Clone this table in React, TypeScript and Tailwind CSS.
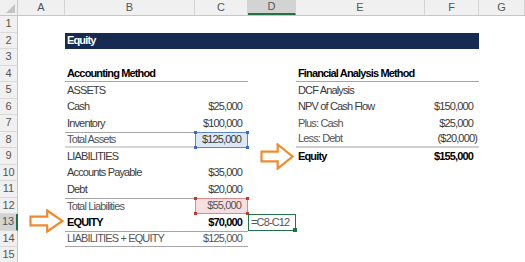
import React from "react";

const COLS = "grid grid-cols-[18px_47px_130px_53px_48px_129px_54px_1fr]";

function RowHdr({ n, active }: { n: number; active?: boolean }) {
  return (
    <div
      className={
        "flex items-center justify-center border-b border-[#d9d9d9] text-[11px] tracking-normal text-[#555] " +
        (active ? "bg-[#d3d3d3] border-r-2 border-r-[#217346]" : "bg-[#f0f0f0] border-r border-r-[#c8c8c8]")
      }
    >
      {n}
    </div>
  );
}

function C({ children, className = "" }: { children?: React.ReactNode; className?: string }) {
  return <div className={"relative flex items-center whitespace-nowrap overflow-visible " + className}>{children}</div>;
}

function Handles({ color }: { color: string }) {
  const s = "absolute w-[3px] h-[3px] " + color;
  return (
    <>
      <span className={s + " -left-[2px] -top-[2px]"} />
      <span className={s + " -right-[2px] -top-[2px]"} />
      <span className={s + " -left-[2px] -bottom-[2px]"} />
      <span className={s + " -right-[2px] -bottom-[2px]"} />
    </>
  );
}

function Arrow({ w, h }: { w: number; h: number }) {
  const sh = h * 0.36;
  const mid = h / 2;
  const hx = w * 0.52;
  return (
    <svg width={w} height={h} viewBox={`0 0 ${w} ${h}`}>
      <polygon
        points={`1.5,${mid - sh / 2} ${hx},${mid - sh / 2} ${hx},1.5 ${w - 1.5},${mid} ${hx},${h - 1.5} ${hx},${mid + sh / 2} 1.5,${mid + sh / 2}`}
        fill="white"
        stroke="#f08a2c"
        strokeWidth="2.2"
        strokeLinejoin="miter"
      />
    </svg>
  );
}

export default function App() {
  const row = COLS + " h-[16.5px]";
  const txt = "pl-[2px] text-[#3a3a3a]";
  const num = "justify-end pr-[6px] text-[#3a3a3a]";
  const line = "border-[#a6a6a6]";
  return (
    <div
      className="relative w-[525px] h-[262px] overflow-hidden bg-white text-[11px] tracking-[-0.85px] leading-none"
      style={{ fontFamily: '"Liberation Sans", Arial, sans-serif' }}
    >
      {/* column headers */}
      <div className={COLS + " h-[16px] bg-[#f0f0f0] border-b border-[#c6c6c6] text-[#555] tracking-normal"}>
        <div className="relative border-r border-[#c8c8c8]">
          <svg className="absolute right-[2px] bottom-[2px]" width="9" height="9" viewBox="0 0 9 9">
            <polygon points="9,0 9,9 0,9" fill="#c4c4c4" />
          </svg>
        </div>
        {["A", "B", "C", "D", "E", "F", "G"].map((l) => (
          <div
            key={l}
            className={
              "flex items-center justify-center border-r border-[#d4d4d4] " +
              (l === "D" ? "bg-[#d3d3d3] border-b-2 border-b-[#217346]" : "")
            }
          >
            {l}
          </div>
        ))}
      </div>

      {/* 1 */}
      <div className={row}><RowHdr n={1} /></div>
      {/* 2 */}
      <div className={row}>
        <RowHdr n={2} />
        <C />
        <C className="col-span-5 bg-[#152b52] pl-[2px] font-bold text-white">Equity</C>
      </div>
      {/* 3 */}
      <div className={row}><RowHdr n={3} /></div>
      {/* 4 */}
      <div className={row}>
        <RowHdr n={4} />
        <C />
        <C className={"pl-[2px] font-bold text-black border-b " + line}>Accounting Method</C>
        <C className={"border-b " + line} />
        <C />
        <C className={"pl-[2px] font-bold text-black border-b " + line}>Financial Analysis Method</C>
        <C className={"border-b " + line} />
      </div>
      {/* 5 */}
      <div className={row}>
        <RowHdr n={5} />
        <C />
        <C className={txt}>ASSETS</C>
        <C />
        <C />
        <C className={txt}>DCF Analysis</C>
      </div>
      {/* 6 */}
      <div className={row}>
        <RowHdr n={6} />
        <C />
        <C className={txt}>Cash</C>
        <C className={num}>$25,000</C>
        <C />
        <C className={txt}>NPV of Cash Flow</C>
        <C className={num}>$150,000</C>
      </div>
      {/* 7 */}
      <div className={row}>
        <RowHdr n={7} />
        <C />
        <C className={txt}>Inventory</C>
        <C className={num}>$100,000</C>
        <C />
        <C className={txt + " text-[#555]"}>Plus: Cash</C>
        <C className={num}>$25,000</C>
      </div>
      {/* 8 */}
      <div className={row}>
        <RowHdr n={8} />
        <C />
        <C className={"pl-[2px] text-[#555] border-t border-b-2 border-t-[#a6a6a6] border-b-[#d6d6d6]"}>Total Assets</C>
        <C className={num + " bg-[#dde8f6] border border-[#5b86c8]"}>
          $125,000
          <Handles color="bg-[#3b6cc0]" />
        </C>
        <C />
        <C className={txt + " text-[#555] border-b-2 border-[#cfcfcf]"}>Less: Debt</C>
        <C className="justify-end pr-[2px] text-[#3a3a3a] border-b-2 border-[#cfcfcf]">($20,000)</C>
      </div>
      {/* 9 */}
      <div className={row}>
        <RowHdr n={9} />
        <C />
        <C className={txt}>LIABILITIES</C>
        <C />
        <C />
        <C className="pl-[2px] font-bold text-black">Equity</C>
        <C className="justify-end pr-[6px] font-bold text-black">$155,000</C>
      </div>
      {/* 10 */}
      <div className={row}>
        <RowHdr n={10} />
        <C />
        <C className={txt}>Accounts Payable</C>
        <C className={num}>$35,000</C>
      </div>
      {/* 11 */}
      <div className={row}>
        <RowHdr n={11} />
        <C />
        <C className={txt}>Debt</C>
        <C className={num}>$20,000</C>
      </div>
      {/* 12 */}
      <div className={row}>
        <RowHdr n={12} />
        <C />
        <C className={"pl-[2px] text-[#555] border-t " + line}>Total Liabilities</C>
        <C className="justify-end pr-[6px] text-[#555] bg-[#f7dfdf] border border-[#d98a8a]">
          $55,000
          <Handles color="bg-[#c0392b]" />
        </C>
      </div>
      {/* 13 */}
      <div className={row}>
        <RowHdr n={13} active />
        <C />
        <C className="pl-[2px] font-bold text-black">EQUITY</C>
        <C className="justify-end pr-[6px] font-bold text-black">$70,000</C>
        <C className="pl-[2px] text-[#555] border border-[#217346]">
          =C8-C12
          <span className="absolute -right-[2px] -bottom-[2px] w-[4px] h-[4px] bg-[#217346]" />
        </C>
      </div>
      {/* 14 */}
      <div className={row}>
        <RowHdr n={14} />
        <C />
        <C className={"pl-[2px] text-[#555] border-t border-b " + line}>LIABILITIES + EQUITY</C>
        <C className={num + " text-[#555] border-t border-b " + line}>$125,000</C>
      </div>
      {/* 15 */}
      <div className={row}><RowHdr n={15} /></div>

      {/* callout arrows */}
      <div className="absolute left-[260px] top-[143px]">
        <Arrow w={34} h={27} />
      </div>
      <div className="absolute left-[29px] top-[209px]">
        <Arrow w={35} h={24} />
      </div>
    </div>
  );
}
